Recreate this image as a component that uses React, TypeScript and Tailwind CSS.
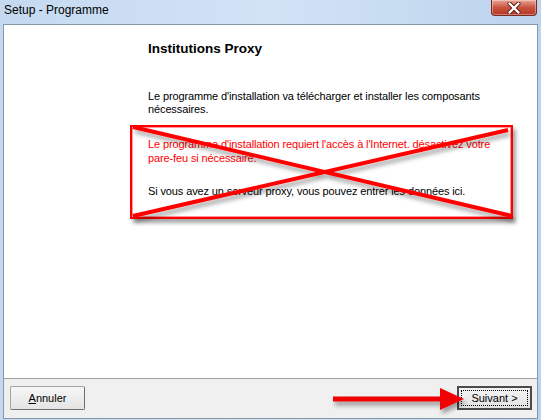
import React from "react";

const font = { fontFamily: '"Liberation Sans", Arial, sans-serif' };

function CloseButton() {
  return (
    <div className="absolute top-0 right-[1px] w-[46px] h-[16px] rounded-b-[4px] border border-t-0 border-[#7a2a20] bg-gradient-to-b from-[#e9a596] via-[#c9533f] to-[#b33a26] flex items-center justify-center shadow-[inset_0_0_0_1px_rgba(255,255,255,0.35)]">
      <svg width="16" height="12" viewBox="0 0 16 12">
        <path d="M3.5 1.5 L12.5 10.5 M12.5 1.5 L3.5 10.5" stroke="#5a1a12" strokeWidth="4" strokeLinecap="round" />
        <path d="M3.5 1.5 L12.5 10.5 M12.5 1.5 L3.5 10.5" stroke="#ffffff" strokeWidth="2.4" strokeLinecap="round" />
      </svg>
    </div>
  );
}

export default function App() {
  return (
    <div
      className="relative w-[541px] h-[420px] overflow-hidden flex flex-col px-[3px] pb-[1px] bg-gradient-to-r from-[#c4d9f0] via-[#d2e3f6] to-[#bcd3ec]"
      style={font}
    >
      {/* Title bar */}
      <div className="relative h-[24px] shrink-0">
        <div className="pl-[1px] pt-[2px] text-[12px] leading-[16px] text-black">Setup - Programme</div>
        <CloseButton />
      </div>

      {/* Client area */}
      <div className="flex-1 flex flex-col border border-[#8797aa]">
        <div className="flex-1 bg-white pl-[144px] pt-[16px] pr-[20px]">
          <h1 className="text-[13.5px] leading-[16px] font-bold text-black">Institutions Proxy</h1>
          <div className="mt-[33px] text-[11px] leading-[13px] tracking-[-0.12px] text-black">
            <p>
              Le programme d'installation va télécharger et installer les composants
              <br />
              nécessaires.
            </p>
            <p className="mt-[21px] text-[#ff0000] leading-[14px]">
              Le programme d'installation requiert l'accès à l'Internet. désactivez votre
              <br />
              pare-feu si nécessaire.
            </p>
            <p className="mt-[20px]">Si vous avez un serveur proxy, vous pouvez entrer les données ici.</p>
          </div>
        </div>
        <div className="h-[40px] shrink-0 border-t border-[#a0a0a0] bg-[#f0f0f0] flex items-start justify-between pl-[6px] pr-[5px] pt-[7px]">
          <button className="w-[75px] h-[24px] rounded-[2px] border border-[#a5a5a5] border-r-[#6f6f6f] border-b-[#6f6f6f] bg-gradient-to-b from-[#f6f6f6] to-[#e4e4e4] text-[11px] text-black">
            <span className="underline">A</span>nnuler
          </button>
          <button className="relative w-[75px] h-[24px] border-2 border-[#4a4a4a] bg-gradient-to-b from-[#f4f4f4] to-[#e2e2e2] text-[11px] text-black">
            <span className="absolute inset-[2px] border border-dotted border-black" />
            Suivant &gt;
          </button>
        </div>
      </div>

      {/* Red crossed box annotation */}
      <div className="absolute left-[130px] top-[125px] w-[383px] h-[94px] border-2 border-[#ff0000] shadow-[3px_4px_4px_rgba(0,0,0,0.35)]">
        <div className="absolute inset-0 border border-[#ff9a9a]" />
      </div>
      <svg className="absolute left-0 top-0 pointer-events-none" width="541" height="420">
        <defs>
          <filter id="sh" x="-10%" y="-10%" width="120%" height="140%">
            <feDropShadow dx="2" dy="4" stdDeviation="2" floodColor="#000" floodOpacity="0.35" />
          </filter>
        </defs>
        <g filter="url(#sh)">
          <line x1="133" y1="127" x2="512" y2="216" stroke="#ff0000" strokeWidth="4" />
          <line x1="133" y1="216" x2="508" y2="130" stroke="#ff0000" strokeWidth="4" />
          <line x1="333" y1="399" x2="446" y2="399" stroke="#f00000" strokeWidth="5" />
          <polygon points="440,388 464,399 440,410" fill="#f00000" />
        </g>
      </svg>
    </div>
  );
}
